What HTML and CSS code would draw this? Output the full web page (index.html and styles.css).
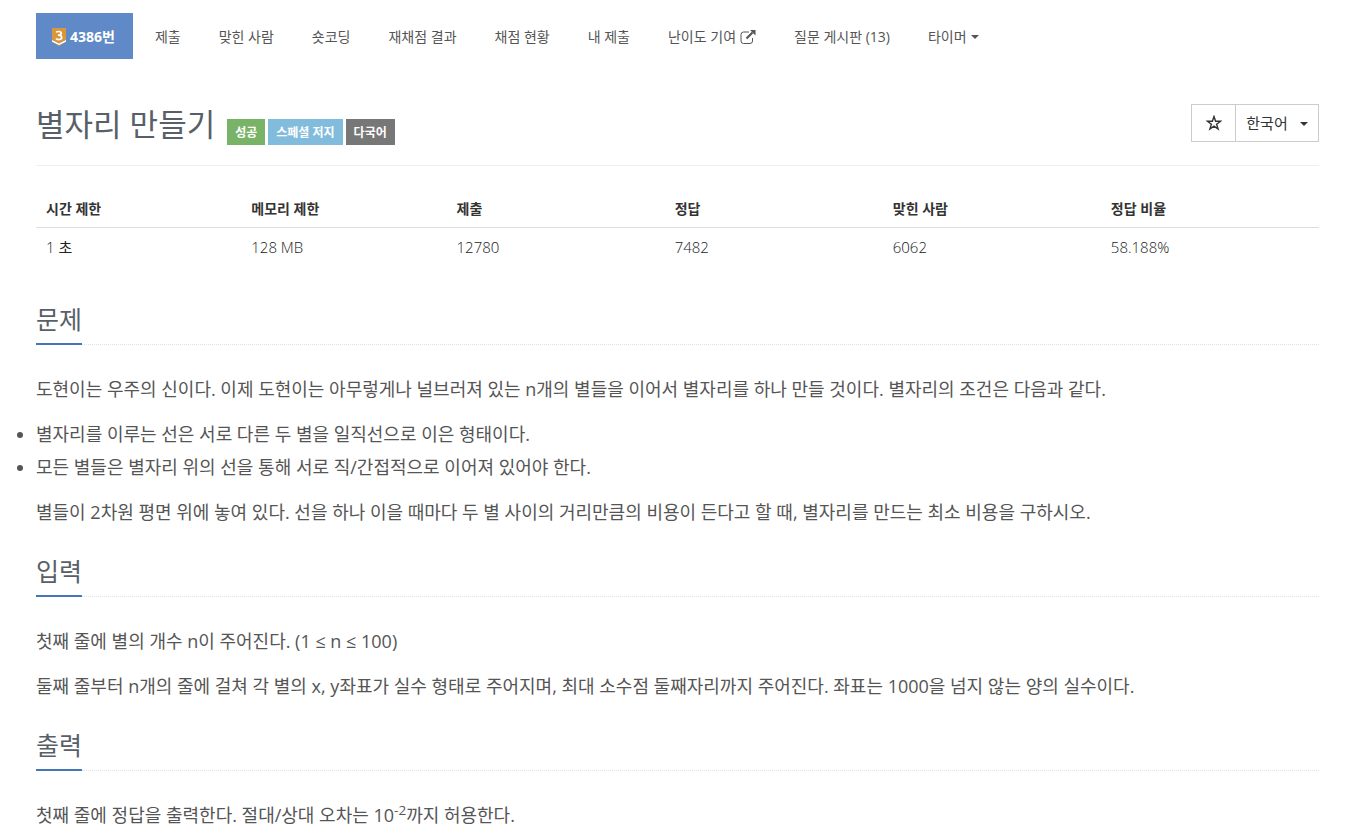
FILE: index.html
```html
<!DOCTYPE html>
<html lang="ko">
<head>
<meta charset="utf-8">
<title>4386번: 별자리 만들기</title>
<link rel="stylesheet" href="styles.css">
</head>
<body>
<main class="container">
  <nav class="problem-menu">
    <a class="menu-item active" href="#"><svg class="tier" viewBox="0 0 14 18" aria-hidden="true"><path d="M0 0h14v12l-7 3.500L0 12z" fill="#d9963a"/><path d="M0 12l7 3.500 7-3.500v1.700l-7 3.500-7-3.500z" fill="#fff"/><path d="M0 14l7 3.200 7-3.200-7 4z" fill="#d9963a"/><path d="M4.200 4.400C5 3.200 9.200 2.900 9.200 5.300 9.200 6.800 7.800 7.200 6 7.200c2 0 3.700.4 3.700 2.200 0 2.500-4.300 2.700-5.700 1.300" fill="none" stroke="#fff" stroke-width="1.700"/></svg>4386번</a>
    <a class="menu-item" href="#">제출</a>
    <a class="menu-item" href="#">맞힌 사람</a>
    <a class="menu-item" href="#">숏코딩</a>
    <a class="menu-item" href="#">재채점 결과</a>
    <a class="menu-item" href="#">채점 현황</a>
    <a class="menu-item" href="#">내 제출</a>
    <a class="menu-item" href="#">난이도 기여 <svg class="external" viewBox="0 0 16 14" aria-hidden="true"><path d="M9 2H3.500a2.500 2.500 0 0 0-2.500 2.500V11a2.500 2.500 0 0 0 2.500 2.500H10a2.500 2.500 0 0 0 2.500-2.500V8" fill="none" stroke="currentColor"/><path d="M6.500 8.500l6-6" stroke="currentColor" stroke-width="2.200"/><path d="M10 0h5.500v5.500z" fill="currentColor"/></svg></a>
    <a class="menu-item" href="#">질문 게시판 (13)</a>
    <a class="menu-item" href="#">타이머<span class="caret"></span></a>
  </nav>
  <header class="page-header">
    <h1 class="title">별자리 만들기</h1>
    <div class="labels"><span class="label success">성공</span><span class="label special">스페셜 저지</span><span class="label multi">다국어</span></div>
    <div class="actions">
      <button class="button star" type="button" aria-label="즐겨찾기"><svg class="star-icon" viewBox="0 0 16 16" aria-hidden="true"><path d="M8 1.500l1.600 4.700h5l-4 3 1.500 4.900L8 11.200l-4.100 2.900 1.500-4.900-4-3h5z" fill="none" stroke="currentColor" stroke-width="1.400"/></svg></button>
      <button class="button language" type="button">한국어 <span class="caret"></span></button>
    </div>
  </header>
  <table class="info">
    <thead><tr><th class="narrow">시간 제한</th><th class="narrow">메모리 제한</th><th>제출</th><th>정답</th><th>맞힌 사람</th><th>정답 비율</th></tr></thead>
    <tbody><tr><td>1 초</td><td>128 MB</td><td>12780</td><td>7482</td><td>6062</td><td>58.188%</td></tr></tbody>
  </table>
  <section class="section">
    <div class="headline"><h2>문제</h2></div>
    <p>도현이는 우주의 신이다. 이제 도현이는 아무렇게나 널브러져 있는 n개의 별들을 이어서 별자리를 하나 만들 것이다. 별자리의 조건은 다음과 같다.</p>
    <ul><li>별자리를 이루는 선은 서로 다른 두 별을 일직선으로 이은 형태이다.</li><li>모든 별들은 별자리 위의 선을 통해 서로 직/간접적으로 이어져 있어야 한다.</li></ul>
    <p>별들이 2차원 평면 위에 놓여 있다. 선을 하나 이을 때마다 두 별 사이의 거리만큼의 비용이 든다고 할 때, 별자리를 만드는 최소 비용을 구하시오.</p>
  </section>
  <section class="section">
    <div class="headline"><h2>입력</h2></div>
    <p>첫째 줄에 별의 개수 n이 주어진다. (1 ≤ n ≤ 100)</p>
    <p>둘째 줄부터 n개의 줄에 걸쳐 각 별의 x, y좌표가 실수 형태로 주어지며, 최대 소수점 둘째자리까지 주어진다. 좌표는 1000을 넘지 않는 양의 실수이다.</p>
  </section>
  <section class="section">
    <div class="headline"><h2>출력</h2></div>
    <p>첫째 줄에 정답을 출력한다. 절대/상대 오차는 10<sup>-2</sup>까지 허용한다.</p>
  </section>
</main>
</body>
</html>
```
FILE: styles.css
```css
* { box-sizing: border-box; }
body { margin: 0; color: #333; background: #fff; font: 14px/20px "Open Sans", "Noto Sans CJK KR", sans-serif; }
.container { padding: 13px 26px 0 36px; }
.problem-menu { display: flex; gap: 6px; }
.menu-item { display: flex; align-items: center; height: 46px; padding: 2px 16px 0; color: #555; text-decoration: none; white-space: nowrap; }
.menu-item.active { padding-right: 18px; color: #fff; background: #5f8ac7; font-weight: 700; }
.tier { width: 14px; height: 18px; margin-right: 4px; }
.external { width: 16px; height: 14px; margin-left: 4px; }
.caret { display: inline-block; margin-left: 4px; border: 4px solid transparent; border-top-color: currentColor; border-bottom: 0; }
.page-header { display: flex; align-items: flex-start; height: 107px; padding-top: 45px; border-bottom: 1px solid #eee; }
.title { margin: 0; color: #585f69; font-size: 31px; font-weight: 400; line-height: 40px; }
.labels { display: flex; gap: 3px; margin: 15px 0 0 12px; }
.label { padding: 4px 8px 2px; color: #fff; font-size: 12px; font-weight: 700; }
.success { background: #78b367; }
.special { background: #82bcdc; }
.multi { background: #777; }
.actions { display: flex; margin-left: auto; }
.button { display: flex; align-items: center; justify-content: center; height: 38px; border: 1px solid #ccc; background: #fff; color: #333; font: inherit; font-size: 15px; }
.star { width: 45px; }
.language { width: 84px; margin-left: -1px; }
.language .caret { margin: 2px 0 0 12px; }
.star-icon { width: 16px; height: 16px; }
.info { width: 100%; margin-top: 24px; border-collapse: collapse; table-layout: fixed; }
.info th, .info td { padding: 9px 10px 8px; text-align: left; }
.info td { padding: 9px 10px 11px; color: #222; font-family: "Open Sans Light", "Open Sans", "Noto Sans CJK KR", sans-serif; font-size: 15px; }
.info th { border-bottom: 1px solid #ddd; }
.narrow { width: 16%; }
.section { color: #555; font-size: 18px; line-height: 33px; }
.headline { margin: 35px 0 28px; border-bottom: 1px dotted #dde2ea; }
.section + .section .headline { margin-top: 26px; }
.headline h2 { display: block; width: fit-content; margin: 0 0 -1px; padding-bottom: 7px; border-bottom: 2px solid #4575bb; color: #585f69; font-size: 25px; font-weight: 400; line-height: 33px; }
.section p { margin: 0 0 12px; }
.section ul { margin: 0 0 12px; padding: 0; }
sup { font-size: 75%; line-height: 0; }
```
